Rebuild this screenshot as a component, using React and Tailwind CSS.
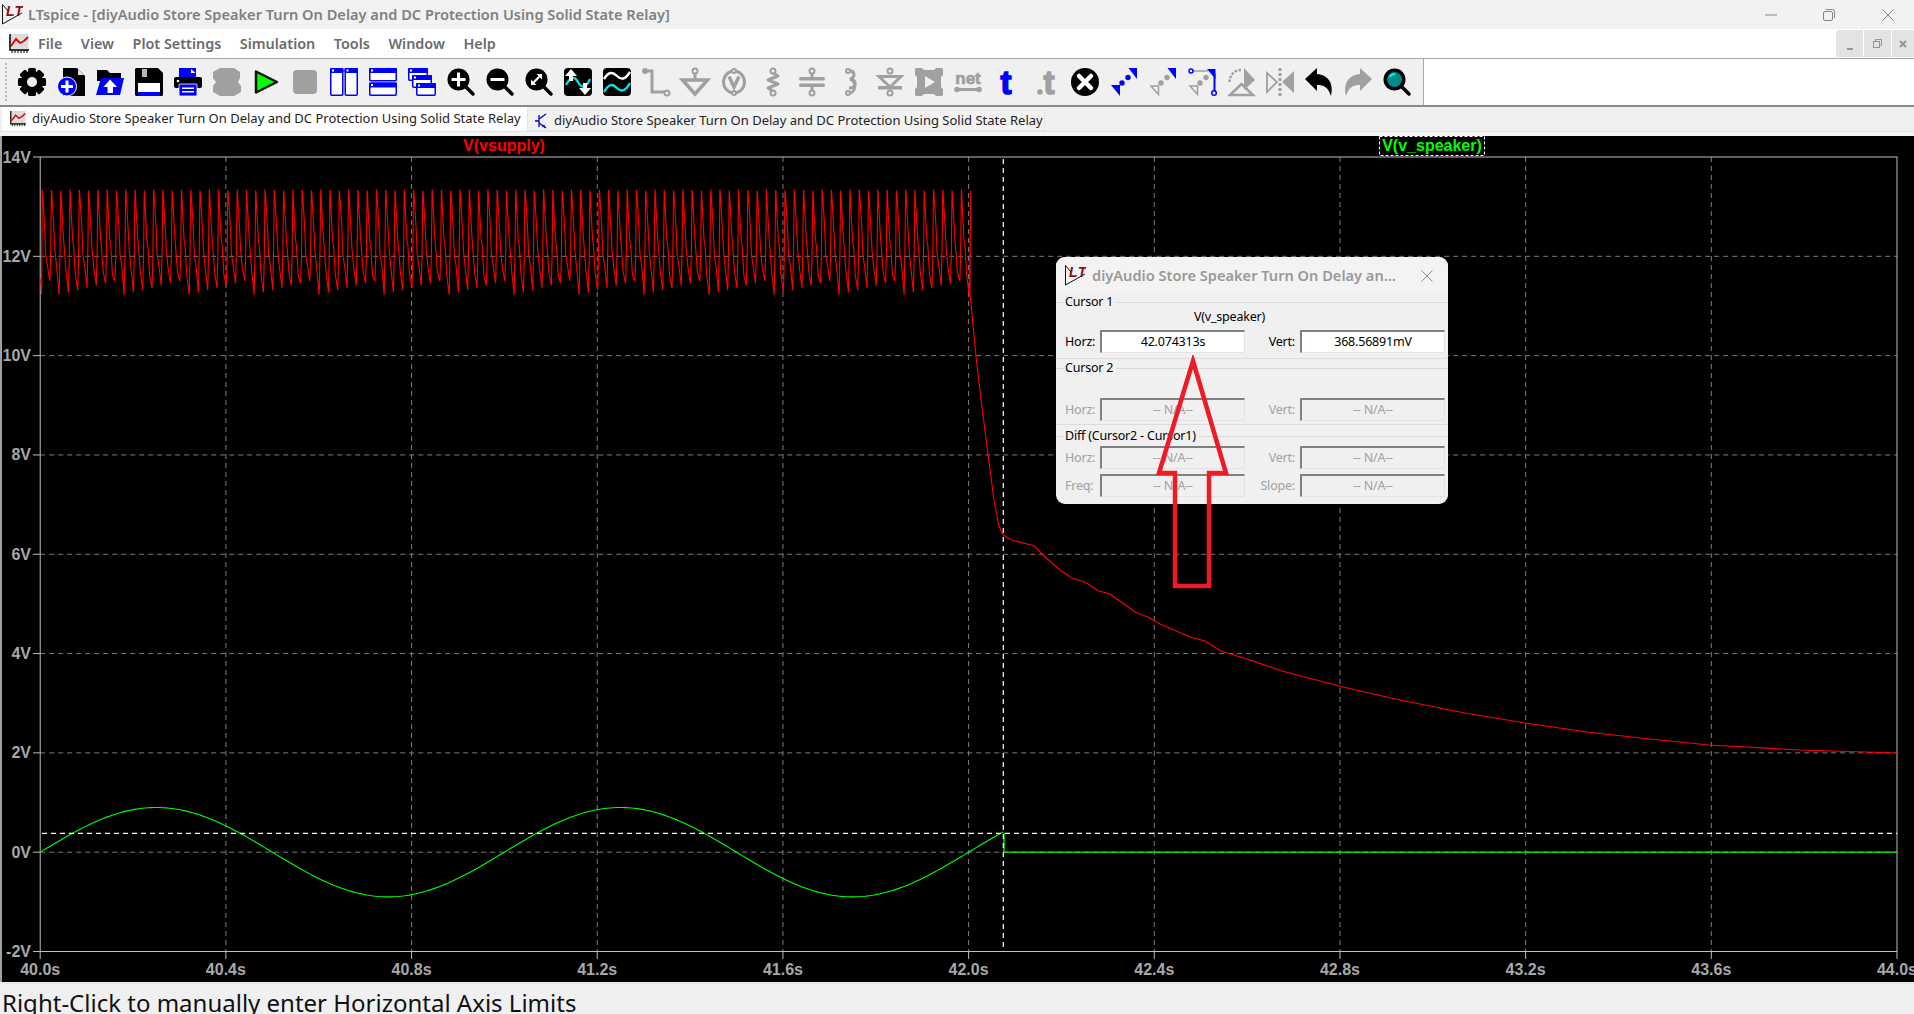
import React from "react";

const GRAY = "#a0a0a0";
const BLUE = "#0000ff";
const BG = "#f0f0f0";

// plot geometry, same numbers as the LTspice pane
const X0 = 40.2;
const X1 = 1897;
const Y14 = 157;
const YN2 = 951.5;
const yOf = v => Y14 + ((14 - v) / 16) * (YN2 - Y14);
const xOf = t => X0 + ((t - 40) / 4) * (X1 - X0);

const V_TICKS = [14, 12, 10, 8, 6, 4, 2, 0, -2];
const T_TICKS = ["40.0", "40.4", "40.8", "41.2", "41.6", "42.0", "42.4", "42.8", "43.2", "43.6", "44.0"];

function supplyPoints() {
  const pts = [[40, 279], [41, 283], [41.6, 294], [42.2, 190]];
  for (let i = 0; i < 100; i++) {
    const x = 42.3 + i * 9.285;
    const top = 189.5 + (i % 3) * 0.6;
    const bottom = 281 + ((i * 13) % 7) * 2.3;
    const wob = ((i * 5) % 4) * 3; // the ripple is not clean, each period sags a bit differently
    pts.push([x, top], [x + 1, 204 + wob], [x + 2.6, 232 + wob], [x + 3.4, 254 - wob], [x + 5.2, 266 + wob], [x + 7.6, bottom], [x + 8.4, 250 + wob], [x + 9.1, top + 1]);
  }
  pts.push([970, 293], [976, 356.7], [980.7, 396.7], [988.3, 456.7], [994, 500], [998.7, 525], [1003, 535], [1011.7, 540], [1034, 545.7], [1043, 555], [1060, 570]);
  pts.push([1072, 578], [1085, 582], [1099, 591], [1110, 594], [1135, 612], [1148, 617], [1160, 624], [1190, 637], [1205, 641], [1221, 651], [1250, 660], [1282, 671], [1343, 687], [1400, 700], [1465, 713], [1525, 723], [1587, 732], [1650, 739], [1709, 745], [1800, 750], [1897, 753]);
  return pts.map(p => p.join(",")).join(" ");
}

function speakerPoints() {
  const pts = [];
  for (let x = X0; x <= 1003.5; x += 3) {
    const t = 40 + ((x - X0) / (X1 - X0)) * 4;
    pts.push([x, yOf(0.9 * Math.sin(2 * Math.PI * (t - 40)))]);
  }
  return pts.map(p => p.join(",")).join(" ");
}

function Ic({ children }) {
  return <svg width="28" height="28" viewBox="0 0 28 28" className="shrink-0 overflow-visible">{children}</svg>;
}

function Gear() {
  return (
    <Ic>
      {[0, 45, 90, 135].map(a => <rect key={a} x="10" y="0" width="8" height="28" rx="1.5" fill="#000" transform={`rotate(${a} 14 14)`} />)}
      <circle cx="14" cy="14" r="10.5" fill="#000" />
      <circle cx="14" cy="14" r="5" fill={BG} />
    </Ic>
  );
}

function Panel({ x, y, w, h }) {
  return (
    <g>
      <rect x={x + 0.75} y={y + 0.75} width={w - 1.5} height={h - 1.5} rx="1" fill="#fff" stroke={BLUE} strokeWidth="1.5" />
      <rect x={x} y={y} width={w} height={Math.min(5, h / 2)} rx="1" fill={BLUE} />
      <rect x={x + 2} y={y + 1.5} width="2" height="2" fill="#fff" />
    </g>
  );
}

function Magnifier({ lens = "#000", children }) {
  return (
    <Ic>
      <line x1="19" y1="19" x2="26" y2="26" stroke="#000" strokeWidth="3.5" strokeLinecap="round" />
      <circle cx="11.5" cy="11.5" r="11" fill="#000" />
      {lens !== "#000" && <circle cx="11.5" cy="11.5" r="7.5" fill={lens} />}
      {children}
    </Ic>
  );
}

function Dot({ x, y, c = GRAY, r = 2.5 }) {
  return <circle cx={x} cy={y} r={r} fill={BG} stroke={c} strokeWidth="2" />;
}

const ICONS = [
  <Gear key="gear" />,
  <Ic key="new">
    <path d="M6 0H20L28 8V28H6Z" fill="#000" />
    <path d="M21 1L27 7H21Z" fill="#e4e4e4" />
    <circle cx="10" cy="18.5" r="9.5" fill={BLUE} stroke="#fff" strokeWidth="1" />
    <path d="M4 17H8.5V12.5H11.5V17H16V20H11.5V24.500H8.500V20H4Z" fill="#fff" />
  </Ic>,
  <Ic key="open">
    <path d="M1 2H11L14 5H25V13H1Z" fill="#000" />
    <path d="M5 10H28L24 27H0Z" fill={BLUE} />
    <path d="M14 11.500L21 19H17V25H11.500V19H7.500Z" fill="#fff" />
  </Ic>,
  <Ic key="save">
    <path d="M1 0H23L28 5V27L27 28H1L0 27V1Z" fill="#000" />
    <rect x="7" y="1" width="5" height="8" fill="#b8b8b8" />
    <rect x="3" y="15" width="22" height="9" fill="#fff" />
    <rect x="3" y="24" width="22" height="4" fill={BLUE} />
  </Ic>,
  <Ic key="print">
    <path d="M5 0H22V9H5Z" fill={BLUE} />
    <path d="M17 1L21.500 5H17Z" fill="#fff" />
    <rect x="0" y="9" width="28" height="11" rx="2" fill="#000" />
    <circle cx="4" cy="13" r="1.300" fill="#fff" />
    <rect x="5" y="16" width="18" height="12" rx="1" fill={BLUE} stroke="#fff" strokeWidth="0.800" />
    <rect x="8" y="19.500" width="12" height="1.500" fill="#fff" />
    <rect x="8" y="23" width="12" height="1.500" fill="#fff" />
  </Ic>,
  <Ic key="halt">
    <path d="M7 0H21L27 4V10L25 14L28 18V24L21 28H7L0 24V18L3 14L0 10V4Z" fill={GRAY} />
  </Ic>,
  <Ic key="run">
    <path d="M4 3.500L25 14L4 24.500Z" fill="#00ff00" stroke="#111" strokeWidth="2.500" strokeLinejoin="round" />
  </Ic>,
  <Ic key="stop">
    <rect x="2" y="2" width="24" height="24" rx="4" fill={GRAY} />
  </Ic>,
  <Ic key="split-v">
    <Panel x={0} y={0} w={13.500} h={28} />
    <Panel x={14.500} y={0} w={13.500} h={28} />
  </Ic>,
  <Ic key="split-h">
    <Panel x={0} y={0} w={28} h={13.500} />
    <Panel x={0} y={14.500} w={28} h={13.500} />
  </Ic>,
  <Ic key="cascade">
    <Panel x={0} y={0} w={20} h={13} />
    <Panel x={4} y={7} w={20} h={13} />
    <Panel x={8} y={15} w={20} h={13} />
  </Ic>,
  <Magnifier key="zoom-in">
    <path d="M4.500 10H10V4.500H13V10H18.500V13H13V18.500H10V13H4.500Z" fill="#fff" />
  </Magnifier>,
  <Magnifier key="zoom-out">
    <rect x="4.500" y="10" width="14" height="3" fill="#fff" />
  </Magnifier>,
  <Magnifier key="zoom-fit">
    <path d="M6 17L6 11.500L8 13.500L13.500 8L11.500 6L17 6L17 11.500L15 9.500L9.500 15L11.500 17Z" fill="#fff" />
  </Magnifier>,
  <Ic key="autorange">
    <rect width="28" height="28" rx="4" fill="#000" />
    <path d="M2 17C7 8 11 8 14 14S22 21 26 11" fill="none" stroke="#00e5ee" strokeWidth="2.200" />
    <path d="M7 1L13 8H9V13H5V8H1Z" fill="#fff" />
    <path d="M21 27L27 20H23V15H19V20H15Z" fill="#fff" />
  </Ic>,
  <Ic key="waves">
    <rect width="28" height="28" rx="4" fill="#000" />
    <path d="M1 11C6 3 10 4 14 8S22 12 27 4" fill="none" stroke="#fff" strokeWidth="2.400" />
    <path d="M1 24C6 15 10 16 14 20S22 24 27 15" fill="none" stroke="#00e5ee" strokeWidth="2.400" />
  </Ic>,
  <Ic key="wire">
    <path d="M3 3H10V24H24" fill="none" stroke={GRAY} strokeWidth="3" />
    <circle cx="3" cy="3" r="3" fill={GRAY} />
    <Dot x={25} y={25} />
  </Ic>,
  <Ic key="ground">
    <Dot x={14} y={3} />
    <path d="M14 5V11" stroke={GRAY} strokeWidth="3" />
    <path d="M1.500 12H26.500L14 26Z" fill="none" stroke={GRAY} strokeWidth="3.500" />
  </Ic>,
  <Ic key="voltage">
    <ellipse cx="14" cy="14" rx="10.500" ry="11" fill="none" stroke={GRAY} strokeWidth="3" />
    <Dot x={14} y={3} r={2} />
    <Dot x={14} y={25} r={2} />
    <path d="M9 8.500L14 19L19 8.500" fill="none" stroke={GRAY} strokeWidth="3.500" />
  </Ic>,
  <Ic key="resistor">
    <Dot x={14} y={3} />
    <path d="M14 5L19 8L9 12L19 16L9 20L14 23" fill="none" stroke={GRAY} strokeWidth="3" strokeLinejoin="round" />
    <Dot x={14} y={25} />
  </Ic>,
  <Ic key="cap">
    <Dot x={14} y={3} />
    <path d="M14 5V10M14 17V23" stroke={GRAY} strokeWidth="3" />
    <rect x="1" y="9" width="26" height="3.500" rx="1.700" fill={GRAY} />
    <rect x="1" y="15.500" width="26" height="3.500" rx="1.700" fill={GRAY} />
    <Dot x={14} y={25} />
  </Ic>,
  <Ic key="inductor">
    <path d="M11 3C18 2 19 9 13 11C20 11 20 21 12 20" fill="none" stroke={GRAY} strokeWidth="3" />
    <path d="M13 11C20 13 19 25 12 25" fill="none" stroke={GRAY} strokeWidth="3" />
    <Dot x={11} y={3} r={2} />
    <Dot x={11} y={25} r={2} />
  </Ic>,
  <Ic key="diode">
    <Dot x={14} y={3} />
    <path d="M3 8.500H25L14 19Z" fill="none" stroke={GRAY} strokeWidth="3" />
    <rect x="2" y="18" width="24" height="3.500" fill={GRAY} />
    <Dot x={14} y={25} />
  </Ic>,
  <Ic key="component">
    <path d="M1 0H7L9 2H19L21 0H27L28 1V7L26 9V19L28 21V27L27 28H21L19 26H9L7 28H1L0 27V21L2 19V9L0 7V1Z" fill={GRAY} />
    <path d="M10 8L20 14L10 20Z" fill={BG} />
  </Ic>,
  <Ic key="net">
    <text x="14" y="16" textAnchor="middle" fontFamily="'Liberation Sans',sans-serif" fontWeight="700" fontSize="17" fill={GRAY} stroke={GRAY} strokeWidth="0.700">net</text>
    <rect x="1" y="20" width="26" height="3" fill={GRAY} />
    <circle cx="3" cy="21.500" r="2.800" fill={GRAY} />
    <circle cx="25" cy="21.500" r="2.800" fill={GRAY} />
  </Ic>,
  <Ic key="text">
    <text x="13" y="26" textAnchor="middle" fontFamily="'Liberation Sans',sans-serif" fontWeight="700" fontSize="33" fill={BLUE} stroke={BLUE} strokeWidth="1.500">t</text>
  </Ic>,
  <Ic key="directive">
    <text x="17" y="26" textAnchor="middle" fontFamily="'Liberation Sans',sans-serif" fontWeight="700" fontSize="33" fill={GRAY} stroke={GRAY} strokeWidth="1.500">t</text>
    <circle cx="8" cy="24" r="2.800" fill={GRAY} />
  </Ic>,
  <Ic key="cut">
    <circle cx="14" cy="14" r="14" fill="#000" />
    <path d="M8 8L20 20M20 8L8 20" stroke="#fff" strokeWidth="4.500" strokeLinecap="round" />
  </Ic>,
  <Ic key="move">
    <path d="M27 0H18.500L27 11Z" fill={BLUE} />
    <path d="M1 17H10V28Z" fill={BLUE} />
    <circle cx="18" cy="9.500" r="2.700" fill={BLUE} />
    <circle cx="12" cy="15" r="2.700" fill={BLUE} />
  </Ic>,
  <Ic key="drag">
    <path d="M27 0H18.500L27 11Z" fill={BLUE} />
    <path d="M2 18H9.500V26.500Z" fill="none" stroke={GRAY} strokeWidth="1.500" />
    <circle cx="18" cy="9.500" r="2.700" fill={GRAY} />
    <circle cx="12" cy="15" r="2.700" fill={GRAY} />
  </Ic>,
  <Ic key="wire-drag">
    <path d="M4 3H20" stroke={GRAY} strokeWidth="1.500" />
    <path d="M26.500 6V24" stroke={BLUE} strokeWidth="2" />
    <path d="M27.500 1H19L27.500 11Z" fill={BLUE} />
    <circle cx="3" cy="3" r="2" fill={BG} stroke={BLUE} strokeWidth="1.500" />
    <circle cx="26" cy="25" r="2.300" fill={BG} stroke={BLUE} strokeWidth="1.500" />
    <path d="M2 18H9.500V26.500Z" fill="none" stroke={GRAY} strokeWidth="1.500" />
    <circle cx="18" cy="9.500" r="2.700" fill={GRAY} />
    <circle cx="12" cy="15" r="2.700" fill={GRAY} />
  </Ic>,
  <Ic key="rotate">
    <path d="M17 0L28 12L17 22Z" fill={GRAY} />
    <path d="M3 27H26L14.500 16Z" fill="none" stroke={GRAY} strokeWidth="2.500" />
    <path d="M14 2C8 2 3 6 2.500 14" fill="none" stroke={GRAY} strokeWidth="2.500" strokeDasharray="2.500 1.500" />
  </Ic>,
  <Ic key="mirror">
    <path d="M1 5L11 14L1 24Z" fill="none" stroke={GRAY} strokeWidth="1.800" />
    <path d="M28 3V25L16 14Z" fill={GRAY} />
    <path d="M14 0V28" stroke={GRAY} strokeWidth="3" strokeDasharray="3 2" />
  </Ic>,
  <Ic key="undo">
    <path d="M0 11L12 0V6C23 7 29 15 26 28C23 19 19 17 12 17V23Z" fill="#000" />
  </Ic>,
  <Ic key="redo">
    <path d="M28 11L16 0V6C5 7 -1 15 2 28C5 19 9 17 16 17V23Z" fill={GRAY} />
  </Ic>,
  <Magnifier key="find" lens="#008b8b">
    <path d="M7 9C8 7 10 6 12 6" stroke="#00f5f5" strokeWidth="2" fill="none" />
  </Magnifier>,
];

function PlotIcon({ size }) {
  return (
    <svg width={size} height={size} viewBox="0 0 20 20" className="shrink-0">
      <rect x="1.500" y="0" width="18" height="15" fill="#dcdcdc" />
      <path d="M1 0V16H20" fill="none" stroke="#000" strokeWidth="1.500" />
      <path d="M3 19V16M6 19V16M9 19V16M12 19V16M15 19V16M18 19V16M0 4H1M0 8H1M0 12H1" stroke="#000" strokeWidth="1" />
      <path d="M2 12L7 5L11 9L15 7L19 3" fill="none" stroke="#e00000" strokeWidth="1.800" />
    </svg>
  );
}

function LtLogo() {
  return (
    <svg width="21" height="21" viewBox="0 0 21 21" className="shrink-0">
      <path d="M0.500 0.500V20L20 9" fill="none" stroke="#111" strokeWidth="1" />
      <path d="M0.500 0.500L6 7" fill="none" stroke="#111" strokeWidth="1" />
      <text x="12.500" y="11.500" textAnchor="middle" fontFamily="'Liberation Sans',sans-serif" fontStyle="italic" fontWeight="700" fontSize="14" fill="#8b0f12" textLength="17">LT</text>
    </svg>
  );
}

function Plot() {
  const gridV = V_TICKS.slice(1, -1);
  const gridT = T_TICKS.slice(1, -1);
  return (
    <svg viewBox="0 136 1914 846" className="block w-full h-[846px] bg-black font-['Liberation_Sans',sans-serif]">
      {gridV.map(v => <line key={v} x1={X0} x2={X1} y1={yOf(v)} y2={yOf(v)} stroke="#7c7c7c" strokeDasharray="5 4" />)}
      {gridT.map(t => <line key={t} x1={xOf(+t)} x2={xOf(+t)} y1={Y14} y2={YN2} stroke="#7c7c7c" strokeDasharray="5 4" />)}
      <rect x={X0} y={Y14} width={X1 - X0} height={YN2 - Y14} fill="none" stroke="#bdbdbd" />
      {V_TICKS.map(v => (
        <g key={v}>
          <line x1="33" x2={X0} y1={yOf(v)} y2={yOf(v)} stroke="#bdbdbd" />
          <text x="31" y={yOf(v) + 5.500} textAnchor="end" fontSize="16" fontWeight="700" fill="#a8a8a8">{v}V</text>
        </g>
      ))}
      {T_TICKS.map(t => (
        <g key={t}>
          <line x1={xOf(+t)} x2={xOf(+t)} y1={YN2} y2="959" stroke="#bdbdbd" />
          <text x={xOf(+t)} y="974.500" textAnchor="middle" fontSize="16" fontWeight="700" fill="#a8a8a8">{t}s</text>
        </g>
      ))}
      <polyline points={supplyPoints()} fill="none" stroke="#ff0000" strokeWidth="1.100" strokeLinejoin="bevel" />
      <polyline points={speakerPoints()} fill="none" stroke="#00ff00" strokeWidth="1.100" />
      <path d={`M1004 833V${yOf(0)}H${X1}`} fill="none" stroke="#00ff00" strokeWidth="1.300" />
      <line x1="1003.300" x2="1003.300" y1="159" y2={YN2} stroke="#fff" strokeWidth="1.200" strokeDasharray="5 4" />
      <line x1="42" x2={X1} y1="833.300" y2="833.300" stroke="#fff" strokeWidth="1.200" strokeDasharray="5 4" />
      <text x="504" y="150.500" textAnchor="middle" fontSize="16" fontWeight="700" fill="#ff0000">V(vsupply)</text>
      <text x="1432" y="150.500" textAnchor="middle" fontSize="16" fontWeight="700" fill="#00ff00">V(v_speaker)</text>
      <rect x="1379.500" y="136.500" width="105" height="19" fill="none" stroke="#fff" strokeDasharray="3 2" />
    </svg>
  );
}

function Heading({ children }) {
  return (
    <div className="flex items-center h-full">
      <div className="w-[8px] h-px bg-[#d9d9d9]" />
      <span className="px-[1px] text-black whitespace-nowrap">{children}</span>
      <div className="ml-[2px] flex-1 h-px bg-[#d9d9d9]" />
    </div>
  );
}

function Field({ value, disabled }) {
  return (
    <div className={`w-[145px] h-[23px] flex items-center justify-center border-l-2 border-t-2 border-l-[#808080] border-t-[#808080] border-r border-b border-r-[#e4e4e4] border-b-[#e4e4e4] ${disabled ? "bg-[#f0f0f0] text-[#a0a0a0]" : "bg-white text-black"}`}>
      {value}
    </div>
  );
}

function Row({ left, right, leftVal, rightVal, disabled }) {
  const tone = disabled ? "text-[#a0a0a0]" : "text-black";
  return (
    <div className="flex items-center h-[23px]">
      <span className={`w-[44px] pl-[9px] pt-[2px] whitespace-nowrap ${tone}`}>{left}</span>
      <Field value={leftVal} disabled={disabled} />
      <span className={`w-[55px] pr-[5px] pt-[2px] text-right whitespace-nowrap ${tone}`}>{right}</span>
      <Field value={rightVal} disabled={disabled} />
    </div>
  );
}

function CursorDialog() {
  return (
    <div className="absolute left-[1056px] top-[121px] w-[392px] h-[247px] rounded-[9px] bg-[#f0f0f0] overflow-hidden text-[12.500px] leading-none font-['Noto_Sans',sans-serif] tracking-[-0.2px]">
      <div className="h-[37px] bg-[#f3f3f3] flex items-center pl-[9px]">
        <LtLogo />
        <span className="ml-[6px] w-[320px] text-[14.600px] font-semibold text-[#999999] tracking-normal whitespace-nowrap">diyAudio Store Speaker Turn On Delay an...</span>
        <svg width="12" height="12" viewBox="0 0 12 12" className="ml-[9px]">
          <path d="M0.500 0.500L11.500 11.500M11.500 0.500L0.500 11.500" stroke="#8a8a8a" strokeWidth="1" />
        </svg>
      </div>
      <div className="h-[17px]"><Heading>Cursor 1</Heading></div>
      <div className="h-[13px] flex items-center justify-center pr-[45px] text-black">V(v_speaker)</div>
      <div className="mt-[6px]"><Row left="Horz:" right="Vert:" leftVal="42.074313s" rightVal="368.56891mV" /></div>
      <div className="mt-[5px] h-px bg-[#dcdcdc]" />
      <div className="h-[19px]"><Heading>Cursor 2</Heading></div>
      <div className="mt-[20px]"><Row left="Horz:" right="Vert:" leftVal="-- N/A--" rightVal="-- N/A--" disabled /></div>
      <div className="mt-[3px] h-px bg-[#dcdcdc]" />
      <div className="h-[21px] pt-[1px]"><Heading>Diff (Cursor2 - Cursor1)</Heading></div>
      <Row left="Horz:" right="Vert:" leftVal="-- N/A--" rightVal="-- N/A--" disabled />
      <div className="mt-[5px]"><Row left="Freq:" right="Slope:" leftVal="-- N/A--" rightVal="-- N/A--" disabled /></div>
    </div>
  );
}

function RedArrow() {
  return (
    <svg width="80" height="240" viewBox="0 0 80 240" className="absolute left-[1150px] top-[219px]">
      <path d="M43 6L76 118H59V231H25V118H9Z" fill="none" stroke="#ed1c24" strokeWidth="4.500" strokeLinejoin="miter" />
    </svg>
  );
}

export default function App() {
  const menus = ["File", "View", "Plot Settings", "Simulation", "Tools", "Window", "Help"];
  return (
    <div className="w-[1914px] h-[1014px] overflow-hidden bg-[#f0f0f0] font-['Noto_Sans',sans-serif]">
      {/* title bar */}
      <div className="h-[29px] bg-[#f2f2f2] flex items-center pl-[2px]">
        <LtLogo />
        <span className="ml-[5px] text-[14.600px] font-semibold text-[#808080] whitespace-nowrap">LTspice - [diyAudio Store Speaker Turn On Delay and DC Protection Using Solid State Relay]</span>
        <div className="ml-auto flex items-center">
          <div className="w-[58px] pr-[8px] flex justify-center">
            <svg width="12" height="2" viewBox="0 0 12 2"><path d="M0 1H12" stroke="#858585" /></svg>
          </div>
          <div className="w-[58px] pr-[8px] flex justify-center">
            <svg width="12" height="12" viewBox="0 0 12 12" fill="none" stroke="#858585"><rect x="0.500" y="2.500" width="9" height="9" rx="1.500" /><path d="M3 0.500H9.500A2 2 0 0 1 11.500 2.500V9" /></svg>
          </div>
          <div className="w-[52px] flex justify-center">
            <svg width="12" height="12" viewBox="0 0 12 12"><path d="M0.500 0.500L11.500 11.500M11.500 0.500L0.500 11.500" stroke="#858585" /></svg>
          </div>
        </div>
      </div>

      {/* menu bar */}
      <div className="h-[30px] bg-white border-b border-[#a8a8a8] flex items-center pl-[9px]">
        <PlotIcon size={20} />
        <div className="ml-[9px] flex gap-[18.500px] text-[14.400px] font-semibold text-[#6b6b6b]">
          {menus.map(m => <span key={m}>{m}</span>)}
        </div>
        <div className="ml-auto h-full flex items-start gap-px pt-px">
          <div className="w-[27px] h-[27px] rounded-tl-[3px] bg-[#e3e3e3] flex items-end justify-center pb-[7px]">
            <div className="w-[6px] h-[2px] bg-[#8c97a3]" />
          </div>
          <div className="w-[27px] h-[27px] bg-[#e3e3e3] flex items-center justify-center">
            <svg width="9" height="9" viewBox="0 0 9 9" fill="none" stroke="#8c97a3"><rect x="0.500" y="2.500" width="6" height="6" /><path d="M2.500 2V0.500H8.500V6H7" /></svg>
          </div>
          <div className="w-[22px] h-[27px] bg-[#e3e3e3] flex items-center justify-center">
            <svg width="8" height="8" viewBox="0 0 8 8"><path d="M1 1L7 7M7 1L1 7" stroke="#8c97a3" strokeWidth="2" /></svg>
          </div>
        </div>
      </div>

      {/* toolbar */}
      <div className="h-[48px] bg-white border-b-2 border-[#8a8a8a] flex">
        <div className="w-[1424px] h-full bg-[#f0f0f0] border-r border-[#a8a8a8] flex items-center pl-[5px]">
          <div className="w-[2px] h-[38px] border-l-2 border-dotted border-[#b8b8b8]" />
          <div className="ml-[11px] flex gap-[11px]">{ICONS}</div>
        </div>
      </div>

      {/* document tabs */}
      <div className="h-[24px] flex items-start bg-[#f0f0f0] pl-[2px] text-[13px] text-[#222222] whitespace-nowrap">
        <div className="w-[525px] h-full bg-white flex items-center pl-[8px]">
          <PlotIcon size={16} />
          <span className="ml-[6px]">diyAudio Store Speaker Turn On Delay and DC Protection Using Solid State Relay</span>
        </div>
        <div className="w-[518px] h-[21px] mt-[3px] bg-[#f2f2f2] border border-[#e4e4e4] flex items-center pl-[7px]">
          <svg width="14" height="16" viewBox="0 0 14 16" className="shrink-0">
            <path d="M4 2V14M4 8L0 8M4 6L11 1M4 10L11 15" fill="none" stroke="#0000c8" strokeWidth="1.300" />
            <path d="M11 15L7 13.500L9 11.500Z" fill="#0000c8" />
          </svg>
          <span className="ml-[5px]">diyAudio Store Speaker Turn On Delay and DC Protection Using Solid State Relay</span>
        </div>
      </div>
      <div className="h-[5px] border-t border-[#e2e2e2] bg-[#f4f4f4]" />

      {/* waveform pane */}
      <div className="relative">
        <Plot />
        <div className="absolute left-0 top-0 w-[2px] h-full bg-[#a0a0a0]" />
        <CursorDialog />
        <RedArrow />
      </div>

      {/* status bar */}
      <div className="h-[32px] border-t-2 border-[#e6e6e6] overflow-hidden pl-[2px] pt-[4px] text-[24px] leading-[30px] text-[#111111] whitespace-nowrap">
        Right-Click to manually enter Horizontal Axis Limits
      </div>
    </div>
  );
}
